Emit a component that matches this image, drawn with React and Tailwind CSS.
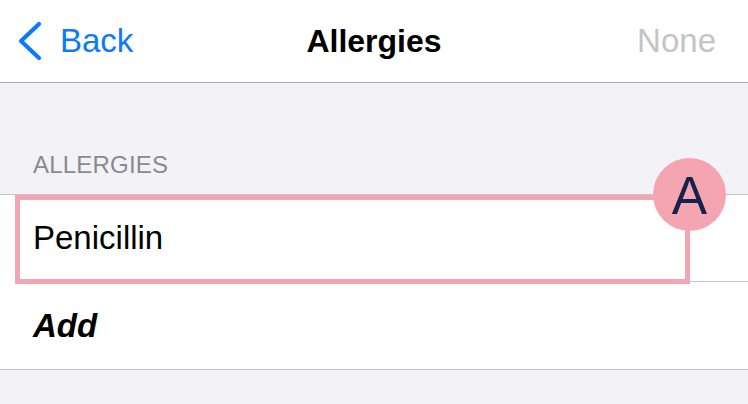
export default function App() {
  return (
    <div className="w-[748px] h-[404px] bg-[#f2f2f7] overflow-hidden" style={{ fontFamily: '"Liberation Sans", Arial, sans-serif' }}>
      <div className="h-[83px] bg-white border-b border-[#b0b0b3] grid grid-cols-[1fr_auto_1fr] items-center">
        <div className="flex items-center pl-[19px]">
          <svg width="26" height="40" viewBox="0 0 26 40" className="mr-[17px] ml-[-2px]">
            <path d="M22 3 L4 20 L22 37" fill="none" stroke="#0a7aff" strokeWidth="4.2" strokeLinecap="round" strokeLinejoin="round" />
          </svg>
          <span className="text-[33px] text-[#0a7aff]">Back</span>
        </div>
        <div className="text-[32px] font-bold text-black">Allergies</div>
        <div className="flex justify-end pr-[32px]">
          <span className="text-[33px] text-[#c4c4c6]">None</span>
        </div>
      </div>
      <div className="h-[111px] flex items-end pb-[15px] pl-[33px]">
        <span className="text-[24px] leading-[29px] text-[#8a8a8e] tracking-[0.2px]">ALLERGIES</span>
      </div>
      <div className="relative bg-white border-t border-b border-[#c6c6c8]">
        <div className="h-[86px] flex items-center pl-[33px]">
          <span className="text-[33px] text-black">Penicillin</span>
        </div>
        <div className="ml-[33px] h-px bg-[#c6c6c8]"></div>
        <div className="h-[87px] flex items-center pl-[33px]">
          <span className="text-[33px] font-bold italic text-black">Add</span>
        </div>
        <div className="absolute left-[15px] top-[0px] w-[675px] h-[89px] border-[5px] border-[#f5a5b1]"></div>
        <div className="absolute left-[653px] top-[-37px] w-[73px] h-[73px] rounded-full bg-[#f5a5b1] flex items-center justify-center">
          <span className="text-[53px] leading-none text-[#14234a] mt-[2px]">A</span>
        </div>
      </div>
    </div>
  );
}
